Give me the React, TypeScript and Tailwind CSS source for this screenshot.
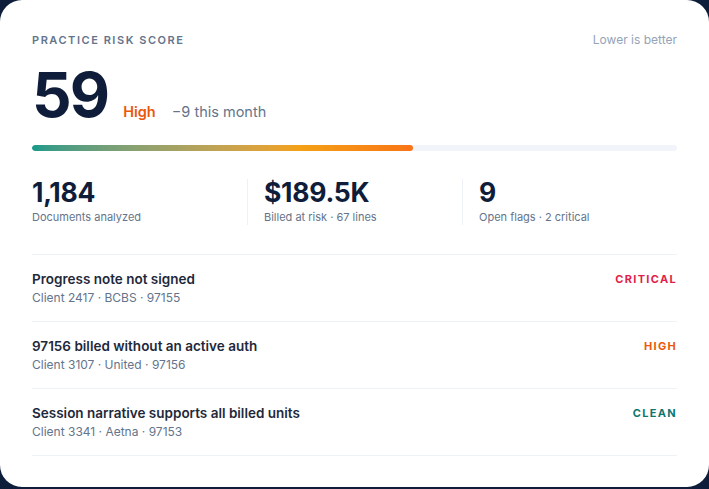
const stats = [
  { value: '1,184', label: 'Documents analyzed' },
  { value: '$189.5K', label: 'Billed at risk · 67 lines' },
  { value: '9', label: 'Open flags · 2 critical' },
];

type Level = 'critical' | 'high' | 'clean';

const flags: { title: string; meta: string; level: Level }[] = [
  { title: 'Progress note not signed', meta: 'Client 2417 · BCBS · 97155', level: 'critical' },
  { title: '97156 billed without an active auth', meta: 'Client 3107 · United · 97156', level: 'high' },
  { title: 'Session narrative supports all billed units', meta: 'Client 3341 · Aetna · 97153', level: 'clean' },
];

const levelClass: Record<Level, string> = {
  critical: 'text-[#e11d48]',
  high: 'text-[#ea580c]',
  clean: 'text-[#0f766e]',
};

function StatBlock({ value, label, first }: { value: string; label: string; first?: boolean }) {
  return (
    <div className={first ? '' : 'border-l border-[#eef1f5] pl-4'}>
      <div className="text-[26.5px] font-bold leading-none tracking-[-0.01em] text-[#0f1d3a]">{value}</div>
      <div className="mt-[3px] text-[11px] leading-4 text-[#64748b]">{label}</div>
    </div>
  );
}

export default function App() {
  const score = 59;

  return (
    <div
      className="h-[489px] w-[709px] bg-[#0d1d3a]"
      style={{ fontFamily: 'Inter, "Noto Sans", sans-serif' }}
    >
      <div className="h-[487px] w-[709px] rounded-[22px] bg-white px-8 pt-8">
        <div className="flex items-center justify-between">
          <span className="text-[11px] font-semibold uppercase leading-4 tracking-[0.14em] text-[#64748b]">
            Practice risk score
          </span>
          <span className="text-xs leading-4 text-[#94a3b8]">Lower is better</span>
        </div>

        <div className="mt-4 flex items-baseline">
          <span className="text-[62px] font-bold leading-none tracking-[-0.03em] text-[#0f1d3a]">{score}</span>
          <span className="ml-[15px] text-[14.5px] font-semibold text-[#ea580c]">High</span>
          <span className="ml-4 text-[14.5px] text-[#64748b]">−9 this month</span>
        </div>

        <div className="mt-[19px] h-1.5 w-full overflow-hidden rounded-full bg-[#f1f4f8]">
          <div
            className="h-full rounded-full bg-gradient-to-r from-[#139a8a] via-[#f3a116] via-70% to-[#f97316]"
            style={{ width: `${score}%` }}
          />
        </div>

        <div className="mt-7 grid grid-cols-3">
          {stats.map((s, i) => (
            <StatBlock key={s.label} value={s.value} label={s.label} first={i === 0} />
          ))}
        </div>

        <div className="mt-[29px]">
          {flags.map((f) => (
            <div
              key={f.title}
              className="flex items-start justify-between border-t border-b-0 border-[#eef1f5] pb-[15px] pt-[15px] last:border-b"
            >
              <div>
                <div className="text-[13.5px] font-semibold leading-[18px] text-[#1e293b]">{f.title}</div>
                <div className="mt-0.5 text-xs leading-4 text-[#64748b]">{f.meta}</div>
              </div>
              <span className={`text-[11px] font-bold uppercase leading-[18px] tracking-[0.12em] ${levelClass[f.level]}`}>
                {f.level}
              </span>
            </div>
          ))}
        </div>
      </div>
    </div>
  );
}
